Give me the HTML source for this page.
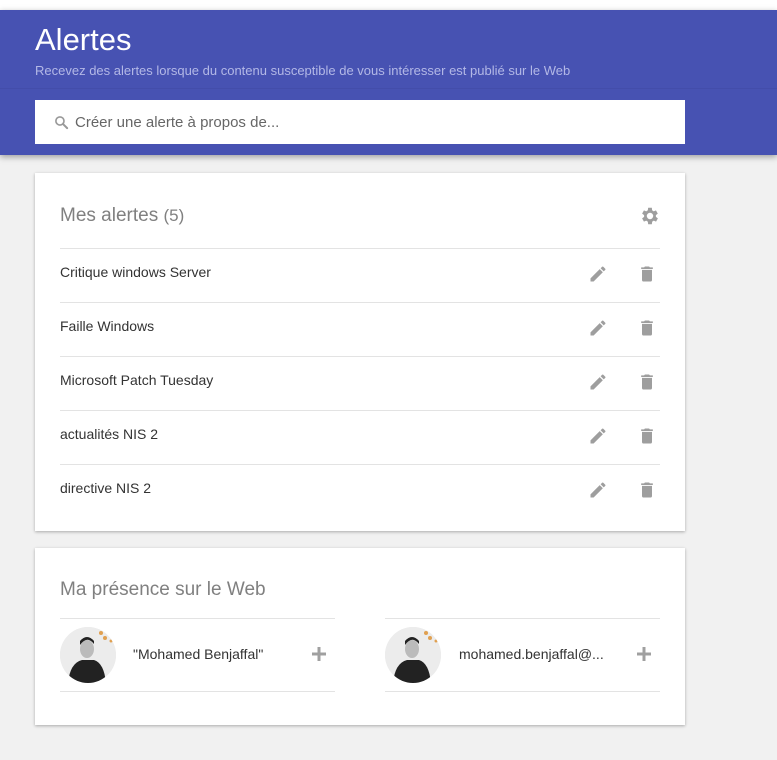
<!DOCTYPE html>
<html><head><meta charset="utf-8">
<style>
*{margin:0;padding:0;box-sizing:border-box}
body{width:777px;height:760px;background:#f1f1f1;font-family:"Liberation Sans",sans-serif;position:relative;overflow:hidden}
.top{position:absolute;left:0;top:0;width:777px;height:10px;background:#fff}
.hdr{position:absolute;left:0;top:10px;width:777px;height:145px;background:#4752b2;box-shadow:0 2px 6px rgba(0,0,0,.35)}
.hdr .line{position:absolute;left:0;top:78px;width:100%;height:1px;background:#434daa}
h1{position:absolute;left:35px;top:12px;font-weight:300;font-size:31px;color:#fff}
.sub{position:absolute;left:35px;top:53px;font-size:13px;color:#b3b8e6}
.search{position:absolute;left:35px;top:90px;width:650px;height:44px;background:#fff}
.search span{position:absolute;left:40px;top:14px;font-size:15px;color:#666}
.search svg{position:absolute;left:19px;top:15px}
.card{position:absolute;left:35px;width:650px;background:#fff;box-shadow:0 1px 3px rgba(0,0,0,.3)}
.title{position:absolute;left:25px;font-size:19px;color:#808080;font-weight:300}
.row{position:absolute;left:25px;width:600px;height:54px;border-top:1px solid #e3e3e3}
.row span{position:absolute;left:0;top:15px;font-size:14px;color:#333}
.row .ed{position:absolute;left:528px;top:15px}
.row .tr{position:absolute;left:577px;top:15px}
.pp{position:absolute;top:70px;width:275px;height:74px;border-top:1px solid #e3e3e3;border-bottom:1px solid #e3e3e3}
.pp .av{position:absolute;left:0;top:8px;width:56px;height:56px;border-radius:50%;background:#e8e8e8;overflow:hidden}
.pp span{position:absolute;top:27px;font-size:14px;color:#333}
.pp .plus{position:absolute;left:250px;top:26px}
</style></head><body>
<div class="top"></div>
<div class="hdr"><div class="line"></div>
<h1>Alertes</h1>
<div class="sub">Recevez des alertes lorsque du contenu susceptible de vous intéresser est publié sur le Web</div>
<div class="search"><svg width="15" height="15" viewBox="0 0 24 24"><circle cx="9.5" cy="9.5" r="6.5" stroke="#999" stroke-width="2.6" fill="none"/><path d="M14.5 14.5L21 21" stroke="#999" stroke-width="3.2" stroke-linecap="round"/></svg><span>Créer une alerte à propos de...</span></div>
</div>

<div class="card" style="top:173px;height:358px">
<div class="title" style="top:32px">Mes alertes <span style="font-size:17px">(5)</span></div>
<svg style="position:absolute;left:604px;top:32px" width="22" height="22" viewBox="0 0 24 24"><path fill="#9e9e9e" d="M19.4 13a7.5 7.5 0 000-2l2.1-1.6-2-3.5-2.5 1a7 7 0 00-1.7-1L15 3h-4l-.4 2.9a7 7 0 00-1.7 1l-2.5-1-2 3.5L6.6 11a7.5 7.5 0 000 2l-2.2 1.6 2 3.5 2.5-1a7 7 0 001.7 1L11 21h4l.4-2.9a7 7 0 001.7-1l2.5 1 2-3.5zM13 15.5a3.5 3.5 0 110-7 3.5 3.5 0 010 7z" transform="translate(-1 0)"/></svg>
<div class="row" style="top:75px"><span>Critique windows Server</span>EDTR</div>
<div class="row" style="top:129px"><span>Faille Windows</span>EDTR</div>
<div class="row" style="top:183px"><span>Microsoft Patch Tuesday</span>EDTR</div>
<div class="row" style="top:237px"><span>actualités NIS 2</span>EDTR</div>
<div class="row" style="top:291px"><span>directive NIS 2</span>EDTR</div>
</div>

<div class="card" style="top:548px;height:177px">
<div class="title" style="top:31px">Ma présence sur le Web</div>
<div class="pp" style="left:25px"><div class="av">AV</div><span style="left:73px">"Mohamed Benjaffal"</span>PL</div>
<div class="pp" style="left:350px"><div class="av">AV</div><span style="left:74px">mohamed.benjaffal@...</span>PL</div>
</div>
<script>
var ed='<svg class="ed" width="20" height="20" viewBox="0 0 24 24"><path fill="#9e9e9e" d="M3 17.25V21h3.75L17.8 9.94l-3.75-3.75zM20.7 7.04a1 1 0 000-1.41l-2.34-2.34a1 1 0 00-1.41 0l-1.83 1.83 3.75 3.75z"/></svg><svg class="tr" width="20" height="20" viewBox="0 0 24 24"><path fill="#9e9e9e" d="M6 19a2 2 0 002 2h8a2 2 0 002-2V7H6zM19 4h-3.5l-1-1h-5l-1 1H5v2h14z"/></svg>';
var av='<svg width="56" height="56" viewBox="0 0 56 56"><circle cx="28" cy="28" r="28" fill="#ececec"/><path d="M8 56 Q10 36 22 33 L34 33 Q44 36 46 56Z" fill="#222"/><ellipse cx="27" cy="22" rx="7" ry="9" fill="#bbb"/><path d="M20 18 Q27 8 34 17 L34 14 Q27 6 20 14Z" fill="#222"/><circle cx="41" cy="6" r="2" fill="#e0a050"/><circle cx="45" cy="11" r="2" fill="#e0a050"/><circle cx="51" cy="14" r="1.5" fill="#e0a050"/></svg>';
var pl='<svg class="plus" width="18" height="18" viewBox="0 0 18 18"><path d="M9 2v14M2 9h14" stroke="#a0a0a0" stroke-width="3"/></svg>';
document.body.innerHTML=document.body.innerHTML.replace(/EDTR/g,ed).replace(/>AV</g,'>'+av+'<').replace(/PL<\/div>/g,pl+'</div>');
</script>
</body></html>
